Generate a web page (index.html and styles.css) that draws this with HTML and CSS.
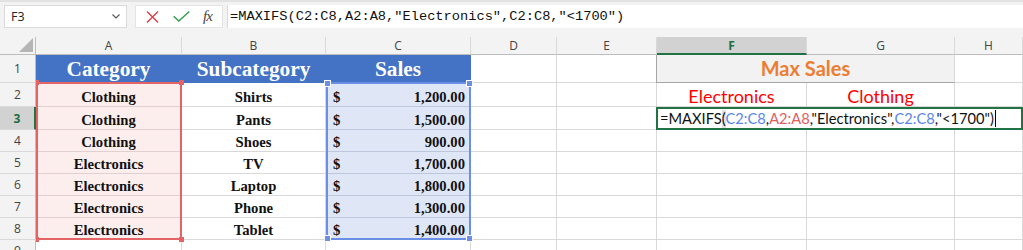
FILE: index.html
```html
<!DOCTYPE html>
<html lang="en">
<head>
  <meta charset="UTF-8">
  <meta name="viewport" content="width=device-width, initial-scale=1.0">
  <title>MAXIFS - Max Sales</title>
  <link rel="stylesheet" href="styles.css">
</head>
<body>

<!-- Formula bar -->
<div class="formula-bar">
  <div class="name-box">
    <span>F3</span>
    <svg class="chevron" width="8" height="5" viewBox="0 0 8 5"><polyline points="0.5,0.5 4,4 7.5,0.5" fill="none" stroke="#555" stroke-width="1.1"/></svg>
  </div>
  <div class="fx-buttons">
    <svg class="btn-cancel" width="13" height="12" viewBox="0 0 13 12"><path d="M1 0.5 L12 11.5 M12 0.5 L1 11.5" stroke="#e2373c" stroke-width="1.3" fill="none"/></svg>
    <svg class="btn-enter" width="17" height="11" viewBox="0 0 17 11"><polyline points="0.7,5.2 5.8,10 16.3,0.6" fill="none" stroke="#2f9a4c" stroke-width="1.4"/></svg>
    <span class="fx"><i>f</i><i>x</i></span>
  </div>
  <div class="formula-input">=MAXIFS(C2:C8,A2:A8,"Electronics",C2:C8,"&lt;1700")</div>
</div>

<div class="sheet-wrap">
  <!-- Sheet grid -->
  <div class="sheet">
    <!-- column headers -->
    <div class="corner"><span class="corner-tri"></span></div>
    <div class="col-h">A</div>
    <div class="col-h">B</div>
    <div class="col-h">C</div>
    <div class="col-h">D</div>
    <div class="col-h">E</div>
    <div class="col-h active">F</div>
    <div class="col-h">G</div>
    <div class="col-h">H</div>

    <!-- row 1 -->
    <div class="row-h">1</div>
    <div class="cell head">Category</div>
    <div class="cell head">Subcategory</div>
    <div class="cell head">Sales</div>
    <div class="cell"></div>
    <div class="cell"></div>
    <div class="cell title">Max Sales</div>
    <div class="cell"></div>

    <!-- row 2 -->
    <div class="row-h">2</div>
    <div class="cell cat">Clothing</div>
    <div class="cell sub">Shirts</div>
    <div class="cell amt"><span>$</span><span>1,200.00</span></div>
    <div class="cell"></div>
    <div class="cell"></div>
    <div class="cell crit">Electronics</div>
    <div class="cell crit">Clothing</div>
    <div class="cell"></div>

    <!-- row 3 -->
    <div class="row-h active">3</div>
    <div class="cell cat">Clothing</div>
    <div class="cell sub">Pants</div>
    <div class="cell amt"><span>$</span><span>1,500.00</span></div>
    <div class="cell"></div>
    <div class="cell"></div>
    <div class="cell edit">=MAXIFS<span class="paren">(</span><span class="ref-c">C2:C8</span>,<span class="ref-a">A2:A8</span>,"Electronics",<span class="ref-c">C2:C8</span>,"&lt;1700")<span class="caret"></span></div>

    <!-- row 4 -->
    <div class="row-h">4</div>
    <div class="cell cat">Clothing</div>
    <div class="cell sub">Shoes</div>
    <div class="cell amt"><span>$</span><span>900.00</span></div>
    <div class="cell"></div><div class="cell"></div><div class="cell"></div><div class="cell"></div><div class="cell"></div>

    <!-- row 5 -->
    <div class="row-h">5</div>
    <div class="cell cat">Electronics</div>
    <div class="cell sub">TV</div>
    <div class="cell amt"><span>$</span><span>1,700.00</span></div>
    <div class="cell"></div><div class="cell"></div><div class="cell"></div><div class="cell"></div><div class="cell"></div>

    <!-- row 6 -->
    <div class="row-h">6</div>
    <div class="cell cat">Electronics</div>
    <div class="cell sub">Laptop</div>
    <div class="cell amt"><span>$</span><span>1,800.00</span></div>
    <div class="cell"></div><div class="cell"></div><div class="cell"></div><div class="cell"></div><div class="cell"></div>

    <!-- row 7 -->
    <div class="row-h">7</div>
    <div class="cell cat">Electronics</div>
    <div class="cell sub">Phone</div>
    <div class="cell amt"><span>$</span><span>1,300.00</span></div>
    <div class="cell"></div><div class="cell"></div><div class="cell"></div><div class="cell"></div><div class="cell"></div>

    <!-- row 8 -->
    <div class="row-h">8</div>
    <div class="cell cat">Electronics</div>
    <div class="cell sub">Tablet</div>
    <div class="cell amt"><span>$</span><span>1,400.00</span></div>
    <div class="cell"></div><div class="cell"></div><div class="cell"></div><div class="cell"></div><div class="cell"></div>

    <!-- row 9 -->
    <div class="row-h">9</div>
    <div class="cell"></div><div class="cell"></div><div class="cell"></div><div class="cell"></div>
    <div class="cell"></div><div class="cell"></div><div class="cell"></div><div class="cell"></div>
  </div>

  <!-- reference highlights of the formula ranges, laid over the grid -->
  <div class="ranges">
    <div class="range range-a">
      <i class="handle tl"></i><i class="handle tr"></i><i class="handle bl"></i><i class="handle br"></i>
    </div>
    <div class="range range-c">
      <i class="handle tl"></i><i class="handle tr"></i><i class="handle bl"></i><i class="handle br"></i>
    </div>
  </div>
</div>

</body>
</html>
```

FILE: styles.css
```css
/* Page */
body {
  margin: 0;
  width: 1023px;
  height: 250px;
  overflow: hidden;
  background: #fff;
  font-family: "Open Sans", "Noto Sans", sans-serif;
}

/* Formula bar */
.formula-bar {
  box-sizing: border-box;
  height: 37px;
  display: flex;
  align-items: flex-start;
  padding-top: 3px;
  background: #f3f3f3;
  border-top: 2px solid #e2e2e2;
}

.name-box {
  box-sizing: border-box;
  width: 123px;
  height: 23px;
  margin-left: 4px;
  padding: 0 6px 0 6px;
  display: flex;
  align-items: center;
  justify-content: space-between;
  background: #fff;
  border: 1px solid #dadada;
  font-size: 12.5px;
  color: #222;
}

.fx-buttons {
  box-sizing: border-box;
  width: 88px;
  height: 23px;
  margin-left: 8px;
  display: flex;
  align-items: center;
  padding-left: 10px;
  background: #fff;
  border: 1px solid #e4e4e4;
}

.btn-enter {
  margin-left: 14px;
}

.fx {
  margin-left: 13px;
  font-family: "Liberation Serif", serif;
  font-size: 15px;
  color: #444;
  letter-spacing: -1px;
}

.formula-input {
  flex: 1;
  height: 23px;
  margin-left: 4px;
  padding-left: 2px;
  background: #fff;
  border-left: 1px solid #dadada;
  font-family: "Liberation Mono", monospace;
  font-size: 13.7px;
  line-height: 24px;
  color: #111;
  white-space: nowrap;
}

/* Sheet grid */
.sheet-wrap {
  position: relative;
}

.sheet,
.ranges {
  display: grid;
  grid-template-columns: 36px 146px 144px 145px 86px 100px 150px 148px 68px;
  grid-template-rows: 18px 28px 24px 23px 22px 22px 22px 22px 22px 22px;
}

.sheet > div {
  box-sizing: border-box;
  border-right: 1px solid #d9d9d9;
  border-bottom: 1px solid #d9d9d9;
}

.corner {
  position: relative;
  background: #f3f3f3;
  border-bottom-color: #bdbdbd !important;
  border-right-color: #bdbdbd !important;
}

.corner-tri {
  position: absolute;
  right: 2px;
  bottom: 2px;
  width: 0;
  height: 0;
  border-left: 14px solid transparent;
  border-bottom: 14px solid #b5b5b5;
}

.col-h {
  background: #f3f3f3;
  border-bottom-color: #bdbdbd !important;
  text-align: center;
  font-size: 12px;
  line-height: 18px;
  color: #444;
}

.col-h.active {
  background: #d2d2d2;
  border-bottom: 2px solid #217346 !important;
  color: #1e6b41;
  font-weight: bold;
  line-height: 17px;
}

.row-h {
  position: relative;
  z-index: 3;
  display: flex;
  align-items: center;
  justify-content: center;
  background: #f3f3f3;
  border-right-color: #bdbdbd !important;
  font-size: 12px;
  color: #444;
}

.row-h.active {
  background: #d2d2d2;
  border-right: 2px solid #217346 !important;
  color: #1e6b41;
  font-weight: bold;
}

/* Table cells */
.cell {
  display: flex;
  align-items: flex-end;
  justify-content: center;
  font-family: "Liberation Serif", serif;
  font-weight: bold;
  font-size: 14.67px;
  line-height: 17px;
  color: #111;
  white-space: nowrap;
}

.cell.head {
  background: #4472c4;
  border-color: #4472c4 !important;
  color: #fff;
  font-size: 21.3px;
  line-height: 24px;
  padding-bottom: 1px;
}

.cell.cat {
  background: #fdeeee;
  border-bottom-color: #e2d0d0;
}

.cell.amt {
  justify-content: space-between;
  padding: 0 5px 0 7px;
  background: #dfe7f7;
  border-bottom-color: #bcc7dc;
}

.cell.title {
  grid-column: span 2;
  align-items: center;
  background: #f2f2f2;
  border-left: 1px solid #a6a6a6;
  border-bottom-color: #a6a6a6;
  margin-left: -1px;
  font-family: Lato, "Open Sans", sans-serif;
  font-size: 20px;
  color: #ed7d31;
}

.cell.crit {
  font-family: Lato, "Open Sans", sans-serif;
  font-weight: normal;
  font-size: 18px;
  line-height: 20px;
  color: #ff0000;
}

/* Cell in edit mode */
.cell.edit {
  grid-column: span 3;
  justify-content: flex-start;
  position: relative;
  z-index: 2;
  margin-left: -1px;
  padding-left: 2px;
  background: #fff;
  border: 2px solid #217346 !important;
  font-family: Lato, "Open Sans", sans-serif;
  font-weight: normal;
  font-size: 14.67px;
  line-height: 18px;
  color: #111;
}

.paren {
  background: #e2e2e2;
}

.ref-c {
  color: #5a86e6;
}

.ref-a {
  color: #e0605f;
}

.caret {
  display: inline-block;
  width: 1px;
  height: 17px;
  margin-left: 1px;
  margin-bottom: 1px;
  background: #000;
}

/* Range highlights over the grid */
.ranges {
  position: absolute;
  top: 0;
  left: 0;
  pointer-events: none;
}

.range {
  position: relative;
  grid-row: 3 / 10;
  margin-top: -1px;
  border: 2px solid;
}

.range-a {
  grid-column: 2;
  border-color: #e46466;
}

.range-c {
  grid-column: 4;
  border-color: #6a8fe4;
}

.handle {
  position: absolute;
  width: 5px;
  height: 5px;
}

.range-a .handle {
  background: #e46466;
}

.range-c .handle {
  background: #6a8fe4;
  border: 1px solid #fff;
}

.handle.tl { left: -4px; top: -4px; }
.handle.tr { right: -4px; top: -4px; }
.handle.bl { left: -4px; bottom: -4px; }
.handle.br { right: -4px; bottom: -4px; }
```
